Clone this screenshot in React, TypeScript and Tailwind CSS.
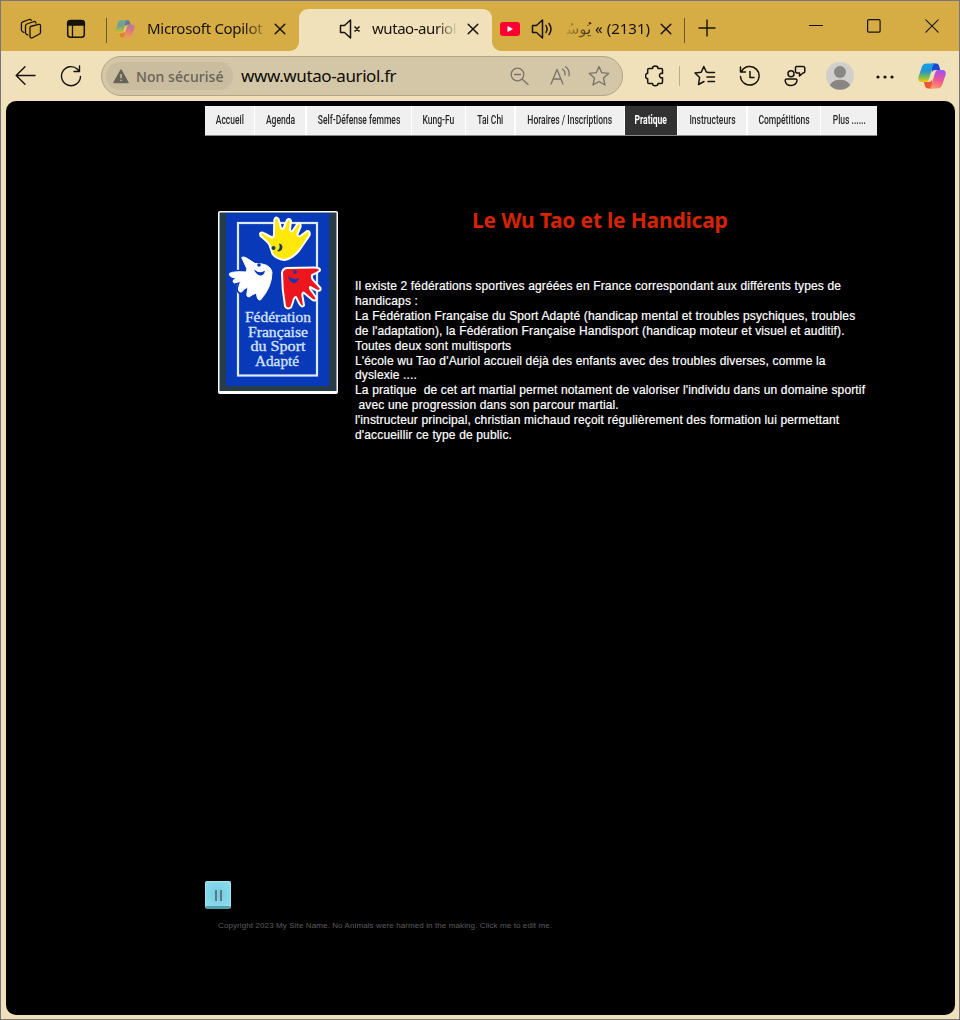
import type { ReactNode } from "react";

const ui = "font-['Noto_Sans','Open_Sans',sans-serif]";

function Icon({ w, h, children, className = "" }: { w: number; h: number; children: ReactNode; className?: string }) {
  return (
    <svg width={w} height={h} viewBox={`0 0 ${w} ${h}`} fill="none" stroke="#17130a" strokeWidth="1.3" strokeLinecap="round" strokeLinejoin="round" className={`block shrink-0 ${className}`}>
      {children}
    </svg>
  );
}

function Close({ className = "" }: { className?: string }) {
  return (
    <Icon w={12} h={12} className={className}>
      <path d="M1.2 1.2 10.8 10.8M10.8 1.2 1.2 10.8" strokeWidth="1.5" />
    </Icon>
  );
}

function Copilot({ id, w, h, className = "" }: { id: string; w: number; h: number; className?: string }) {
  return (
    <svg width={w} height={h} viewBox="0 0 28 26" className={`block shrink-0 ${className}`}>
      <defs>
        <linearGradient id={`${id}a`} x1="0" y1="0" x2="0" y2="1">
          <stop offset="0" stopColor="#13a3e8" />
          <stop offset=".4" stopColor="#2494d2" />
          <stop offset=".7" stopColor="#6cba5c" />
          <stop offset="1" stopColor="#f4c80a" />
        </linearGradient>
        <linearGradient id={`${id}b`} x1=".5" y1="0" x2=".3" y2="1">
          <stop offset="0" stopColor="#a34df0" />
          <stop offset=".5" stopColor="#ee5493" />
          <stop offset="1" stopColor="#ff9a66" />
        </linearGradient>
      </defs>
      <path d="M14 .5h4.2c1.6 0 2.3.8 2.8 2.3L22.300 7h-5.100c-2 0-2.800 1-3.400 3z" fill="#1b48cf" />
      <path d="M14 25.500H10c-1.700 0-2.500-.9-3-2.500L5.800 19h4.800c2 0 3-1 3.500-3z" fill="#f0562e" />
      <path d="M8.500.5h9C15.500.7 15 2.500 14.500 4.200L11 16c-.6 2-1.500 3-3.500 3H3.500C.5 19-.2 16.500.5 14L3.800 4C4.600 1.700 6 .5 8.500.5z" fill={`url(#${id}a)`} />
      <path d="M19.500 25.500h-9c2-.2 2.500-2 3-3.700L17 10c.6-2 1.500-3 3.500-3h4c3 0 3.700 2.500 3 5l-3.300 10c-.8 2.300-2.200 3.500-4.700 3.500z" fill={`url(#${id}b)`} />
      <path d="M13.700 10.500Q14.300 8.300 16.800 7.800L14.400 15.700Q13.800 17.500 11.500 18z" fill="#f0e1bb" />
    </svg>
  );
}

function TitleBar() {
  return (
    <div className={`flex h-[50px] shrink-0 bg-[#d6ad45] ${ui} text-[15px] leading-5 text-[#17130a]`}>
      <Icon w={22} h={22} className="ml-[19px] mt-[17px]">
        <path d="M10.500 8.500 18.500 6.400q2-.4 2 1.300v6.500q0 1.600-1.500 2l-6.500 3.500q-2.500.8-2.500-1.300V10q0-1.200.5-1.500z" />
        <path d="M8 17 6.500 16.300q-1-.5-1-1.800V8q0-1.500 1.400-2L14 3.500q1.600-.4 2 1.500" />
        <path d="M4 14.500 2.300 13.500q-.9-.5-.9-1.700V5.800q0-1.500 1.400-2L9 1.500q1.500-.5 2.300.8" />
      </Icon>
      <Icon w={20} h={20} className="ml-6 mt-[18px]">
        <rect x="1.700" y="1.700" width="16.600" height="16.600" rx="2.800" strokeWidth="1.500" />
        <path d="M1.500 6V4.500q0-3 3-3h11q3 0 3 3V6z" fill="#17130a" />
        <path d="M6.500 6v12" />
      </Icon>
      <div className="ml-5 mt-[17px] h-[25px] w-px shrink-0 bg-[#6f5a26]" />
      <Copilot id="t" w={20} h={18} className="ml-2 mt-[19px] opacity-55" />
      <div className="ml-3 mt-[17px] w-[118px] shrink-0 overflow-hidden whitespace-nowrap tracking-[-0.3px] [mask-image:linear-gradient(to_right,black_82%,transparent_105%)]">Microsoft Copilot</div>
      <Close className="ml-[9px] mt-[22px]" />
      <div className="flex h-full w-1 shrink-0 bg-[#d6ad45]" />
      <div className="h-full w-[9px] shrink-0 bg-[#f0e1bb]">
        <div className="h-full w-full rounded-br-[9px] bg-[#d6ad45]" />
      </div>
      <div className="mt-2 flex h-[42px] w-[193px] shrink-0 rounded-t-[9px] bg-[#f0e1bb]">
        <Icon w={22} h={20} className="ml-10 mt-[10px]">
          <path d="M1.500 6.500h4l6-5.500v18l-6-5.500h-4zM15.500 7.500l5 5M20.500 7.500l-5 5" strokeWidth="1.500" strokeLinecap="butt" />
        </Icon>
        <div className="ml-[11px] mt-[9px] w-[86px] whitespace-nowrap tracking-[-0.45px] [mask-image:linear-gradient(to_right,black_75%,transparent)]">wutao-auriol</div>
        <Close className="ml-[9px] mt-[14px]" />
      </div>
      <div className="h-full w-[9px] shrink-0 bg-[#f0e1bb]">
        <div className="h-full w-full rounded-bl-[9px] bg-[#d6ad45]" />
      </div>
      <svg width="20" height="14" viewBox="0 0 20 14" className="-ml-[1px] mt-[21px] block shrink-0">
        <rect width="20" height="14" rx="3" fill="#ff0033" />
        <path d="M7.500 4v6l5.500-3z" fill="#fff" />
      </svg>
      <Icon w={22} h={20} className="ml-[11px] mt-[18px]">
        <path d="M1.500 6.500h4l6-5.500v18l-6-5.500h-4zM15 6.500q2 3.500 0 7M18 4.500q4 5.500 0 11" strokeWidth="1.500" />
      </Icon>
      <div dir="rtl" className="ml-[13px] mt-[17px] w-[84px] shrink-0 whitespace-nowrap font-['Noto_Sans','DejaVu_Sans',sans-serif] tracking-[-0.4px] [mask-image:linear-gradient(to_left,black_65%,transparent_105%)]">(2131) » يُوسُـ</div>
      <Close className="ml-[10px] mt-[22px]" />
      <div className="ml-3 mt-[17px] h-[25px] w-px shrink-0 bg-[#6f5a26]" />
      <Icon w={18} h={18} className="ml-[13px] mt-[18px]">
        <path d="M9 .5v17M.5 9h17" strokeLinecap="butt" strokeWidth="1.400" />
      </Icon>
      <Icon w={14} h={14} className="ml-[93px] mt-[18px]">
        <path d="M.5 6.500h13" strokeWidth="1" />
      </Icon>
      <Icon w={14} h={14} className="ml-11 mt-[18px]">
        <rect x=".6" y=".6" width="12.500" height="12.500" rx="1.200" strokeWidth="1.200" />
      </Icon>
      <Icon w={14} h={14} className="ml-11 mt-[18px]">
        <path d="M.8.8 13.200 13.200M13.200.8.8 13.200" strokeWidth="1.100" />
      </Icon>
    </div>
  );
}

function Toolbar() {
  return (
    <div className={`flex h-[50px] shrink-0 items-center ${ui}`}>
      <Icon w={21} h={20} className="ml-[14px]">
        <path d="M20 9.500H1.500M10 .8 1.200 9.500 10 18.200" strokeWidth="1.400" />
      </Icon>
      <Icon w={22} h={22} className="ml-[24px]">
        <path d="M20.500 11.500A9.500 9.500 0 1 1 17.500 4.200L19.500 6.500M19.500 1v5.500H14" strokeWidth="1.400" />
      </Icon>
      <div className="ml-[19px] flex h-10 w-[522px] shrink-0 items-center rounded-full border border-[#b0a58a] bg-[#d4c7a7]">
        <div className="ml-1 flex h-7 w-[127px] shrink-0 items-center rounded-full bg-[#c9bc9f]">
          <svg width="16" height="15" viewBox="0 0 16 15" className="ml-[7px] block">
            <path d="M8 1 15 13.500H1z" fill="#666359" stroke="#666359" strokeWidth="1.500" strokeLinejoin="round" />
            <path d="M8 5v4.200M8 10.700v1.400" stroke="#c9bc9f" strokeWidth="1.500" />
          </svg>
          <div className="ml-[7px] whitespace-nowrap text-[14px] font-medium tracking-[0.05px] text-[#666359]">Non sécurisé</div>
        </div>
        <div className="ml-2 w-[258px] whitespace-nowrap text-[17px] tracking-[-0.4px] text-[#0d0b06]">www.wutao-auriol.fr</div>
        <Icon w={19} h={19} className="ml-[11px]">
          <g stroke="#77736a"><circle cx="7.500" cy="7.500" r="6.300" /><path d="M12 12l6 5.500M4.500 7.500h6" /></g>
        </Icon>
        <Icon w={20} h={20} className="ml-[21px]">
          <g stroke="#77736a"><path d="M1 18 7 3.500 13 18M3 13h8M12.500 3q3 2 2.500 6M15.500.8q4.500 3 3.500 9" /></g>
        </Icon>
        <Icon w={22} h={22} className="ml-[18px]">
          <path d="M11 1.500 13.700 7.700 20.700 8.400 15.500 13 17 20 11 16.500 5 20 6.500 13 1.300 8.400 8.300 7.700z" stroke="#77736a" />
        </Icon>
      </div>
      <Icon w={20} h={22} className="ml-[22px]">
        <path d="M4 3.500H7.500C7.500.3 13 .3 13 3.500h3.200q1.300 0 1.300 1.300V8.500C13.500 7 13.500 14 17.500 12.700V17q0 1.500-1.500 1.500h-3C13 21.500 7.500 21.500 7.500 18.500H4q-1.300 0-1.300-1.300V13.800C-.2 13.800-.2 8.300 2.700 8.300V4.800Q2.700 3.500 4 3.500z" strokeWidth="1.500" />
      </Icon>
      <div className="ml-[14px] h-5 w-px shrink-0 bg-[#b9ac8c]" />
      <Icon w={22} h={22} className="ml-[14px]">
        <path d="M14.500 7.500 12.300 7 9.800 1.500 7.200 7.200 1 8l4.600 4.500L4.500 19.500 10 16.500M14 7.500h6.500M13 12h7.500M14 16.500h6.500" strokeWidth="1.500" />
      </Icon>
      <Icon w={22} h={22} className="ml-[23px]">
        <path d="M2.500 6.500A9.300 9.300 0 1 1 1.500 11.500M1.500 2v5h5M11 6.500v6h4" strokeWidth="1.500" />
      </Icon>
      <Icon w={22} h={22} className="ml-[23px]">
        <circle cx="7" cy="8.800" r="3" strokeWidth="1.500" />
        <path d="M2.800 14h8.600q1.800 0 1.600 1.700C12.500 19 10 20.500 7 20.500S1.500 19 1.200 15.700Q1 14 2.800 14zM12.500 1.500h6.500q1.800 0 1.800 1.800v3q0 1.700-1.800 1.700l-3.500 3V8h-2.200q-1.800 0-1.800-1.700V3.200q0-1.700 1-1.700z" strokeWidth="1.500" />
      </Icon>
      <svg width="28" height="28" viewBox="0 0 28 28" className="ml-5 block shrink-0">
        <circle cx="14" cy="14" r="14" fill="#d0cfcb" />
        <circle cx="14" cy="10" r="6" fill="#898684" />
        <path d="M4 23.500C6 15.800 22 15.800 24 23.500A14 14 0 0 1 4 23.500z" fill="#898684" />
      </svg>
      <svg width="18" height="4" viewBox="0 0 18 4" className="ml-[22px] mt-px block shrink-0" fill="#17130a">
        <circle cx="2" cy="2" r="1.600" /><circle cx="9" cy="2" r="1.600" /><circle cx="16" cy="2" r="1.600" />
      </svg>
      <Copilot id="m" w={28} h={26} className="ml-6" />
    </div>
  );
}

const nav = [
  { label: "Accueil", box: "w-[49px]" },
  { label: "Agenda", box: "w-[50px]" },
  { label: "Self-Défense femmes", box: "w-[104px]" },
  { label: "Kung-Fu", box: "w-[53px]" },
  { label: "Tai Chi", box: "w-[48px]" },
  { label: "Horaires / Inscriptions", box: "w-[108px]" },
  { label: "Pratique", box: "w-[52px]", active: true },
  { label: "Instructeurs", box: "w-[68px]" },
  { label: "Compétitions", box: "w-[72px]" },
  { label: "Plus ......", box: "w-[56px]" },
];

function Nav() {
  return (
    <nav className="ml-[199px] mt-[5px] flex h-[30px] w-[672px] justify-between border-b border-[#888] bg-white">
      {nav.map((n) => (
        <div key={n.label} className={`${n.box} flex shrink-0 items-center justify-center pb-0.5 ${n.active ? "bg-[#323232] font-bold text-white" : "bg-[#f0f0f0] font-medium text-[#282828]"}`}>
          <span className="scale-x-[0.71] whitespace-nowrap font-['Roboto','Open_Sans',sans-serif] text-[12px] leading-4">{n.label}</span>
        </div>
      ))}
    </nav>
  );
}

const yellowHand = "M42 22.500Q43 20.500 46.500 22.500L54 26.500Q56.500 26 56 21L56.300 9Q57.500 4.500 60.500 8L63 17Q64.500 19.500 66 16L69 9Q71.500 6.500 73 10L72 19Q73.500 22 75.500 18.500L79.500 12.500Q83 11.500 82.700 15.500L79.500 23Q79.500 27 83 24.500L89 20Q92.500 19.500 91.500 24.500L81.500 39Q74 48 66.500 49Q58 48 54.500 43L51.500 34Q50 31 42.500 25z";
const whiteHand = "M23.700 46.500Q25.500 45 30 48L37 52.500Q52 52 54 61Q54 76 42.500 89Q39 90 38.500 82Q35 83 31 86Q28 86 29 82L30 76Q27 77 23.500 81Q20 81.500 20.500 77L22.500 70.500Q20 71 16.500 72Q14 71 15.500 69L18 67Q11 66.500 11.300 62.500Q15 60 28 61L29 58z";
const redHand = "M64 62Q64.500 57.500 69 57L95.500 56.500Q102.500 56.500 102 59.500Q98 63 94 64Q93 67 96 70L102.500 77Q103.500 80.500 98.500 79.500L92 76Q91 77 94 80.500L98.500 87Q98.500 90.500 94.500 89L85.500 81.500Q83.500 82 85 88L86 94.500Q84 97 81.500 93L78 86Q76 86 75 91L73 96.500Q69 99 67 95Q64 78 64 62z";

function Logo() {
  return (
    <svg width="120" height="184" viewBox="0 0 120 184" className="ml-[212px] block shrink-0">
      <rect width="120" height="183" rx="2" fill="#fff" />
      <rect x="1.500" y="1.500" width="117" height="178.500" fill="#263c49" />
      <rect x="8" y="2" width="103" height="173" fill="#0739b8" />
      <rect x="20" y="12" width="79" height="152.500" fill="none" stroke="#dfe9ff" strokeWidth="2.200" />
      <g strokeLinejoin="round" strokeWidth="2" stroke="#fff">
        <path d={yellowHand} fill="#ffe80a" />
        <path d={whiteHand} fill="#fff" stroke="#0739b8" strokeWidth="4" />
        <path d={whiteHand} fill="#fff" strokeWidth="1" />
        <path d={redHand} fill="#ee161d" />
      </g>
      <path d="M61 32.500c6 .5 3.500 10-2 7.500q4-2 2-7.500z" fill="#193963" />
      <circle cx="55.500" cy="37" r="2" fill="#193963" />
      <path d="M36 58.500q6 5 11 1-1 5.500-5 5-4-1-6-6zM70 65q5 5 11 2-2 6-6 5-4-2-5-7z" fill="#0739b8" />
      <circle cx="41" cy="54" r="1.800" fill="#0739b8" />
      <circle cx="77" cy="61" r="1.800" fill="#0739b8" />
      <g fill="#d9e3ff" fontFamily="Liberation Serif, serif" fontSize="14" textAnchor="middle" stroke="#d9e3ff" strokeWidth=".3">
        <text x="60" y="111" textLength="66" lengthAdjust="spacingAndGlyphs">Fédération</text>
        <text x="60" y="125.500" textLength="60" lengthAdjust="spacingAndGlyphs">Française</text>
        <text x="60" y="140" textLength="55" lengthAdjust="spacingAndGlyphs">du Sport</text>
        <text x="59" y="155" textLength="44" lengthAdjust="spacingAndGlyphs">Adapté</text>
      </g>
    </svg>
  );
}

const lines = [
  "Il existe 2 fédérations sportives agréées en France correspondant aux différents types de",
  "handicaps :",
  "La Fédération Française du Sport Adapté (handicap mental et troubles psychiques, troubles",
  "de l'adaptation), la Fédération Française Handisport (handicap moteur et visuel et auditif).",
  "Toutes deux sont multisports",
  "L'école wu Tao d'Auriol accueil déjà des enfants avec des troubles diverses, comme la",
  "dyslexie ....",
  "La pratique  de cet art martial permet notament de valoriser l'individu dans un domaine sportif",
  " avec une progression dans son parcour martial.",
  "l'instructeur principal, christian michaud reçoit régulièrement des formation lui permettant",
  "d'accueillir ce type de public.",
];

export default function App() {
  return (
    <div className="flex h-[1020px] w-[960px] flex-col overflow-hidden border border-[#77747a] bg-[#f0e1bb]">
      <TitleBar />
      <Toolbar />
      <main className="ml-[5px] h-[914px] w-[949px] shrink-0 overflow-hidden rounded-[10px] bg-black font-['Liberation_Sans',Arial,sans-serif]">
        <Nav />
        <div className="mt-[75px] flex h-[670px] items-start">
          <Logo />
          <div className="ml-[17px] w-[530px]">
            <h1 className={`ml-[117px] mt-[-6px] whitespace-nowrap text-[21px] font-bold leading-[30px] tracking-[-0.2px] text-[#d52300] ${ui}`}>Le Wu Tao et le Handicap</h1>
            <div className="mt-[44px] whitespace-pre text-[12px] leading-[14.900px] tracking-[0.150px] text-white [-webkit-text-stroke:0.2px_white]">
              {lines.map((l) => (
                <div key={l}>{l}</div>
              ))}
            </div>
          </div>
        </div>
        <div className="ml-[199px] flex h-[28px] w-[26px] items-center justify-center gap-[3px] rounded-[2px] border border-b-[3px] border-[#a4e5f2] border-b-[#559eae] bg-[radial-gradient(circle,#70cde6,#91ddec)] pt-[3px]">
          <div className="h-[11px] w-[2px] bg-[#60777e]" />
          <div className="h-[11px] w-[2px] bg-[#60777e]" />
        </div>
        <p className="ml-[212px] mt-3 whitespace-nowrap text-[8px] leading-[10px] tracking-[0.105px] text-[#5c5c5c]">Copyright 2023 My Site Name. No Animals were harmed in the making. Click me to edit me.</p>
      </main>
    </div>
  );
}
